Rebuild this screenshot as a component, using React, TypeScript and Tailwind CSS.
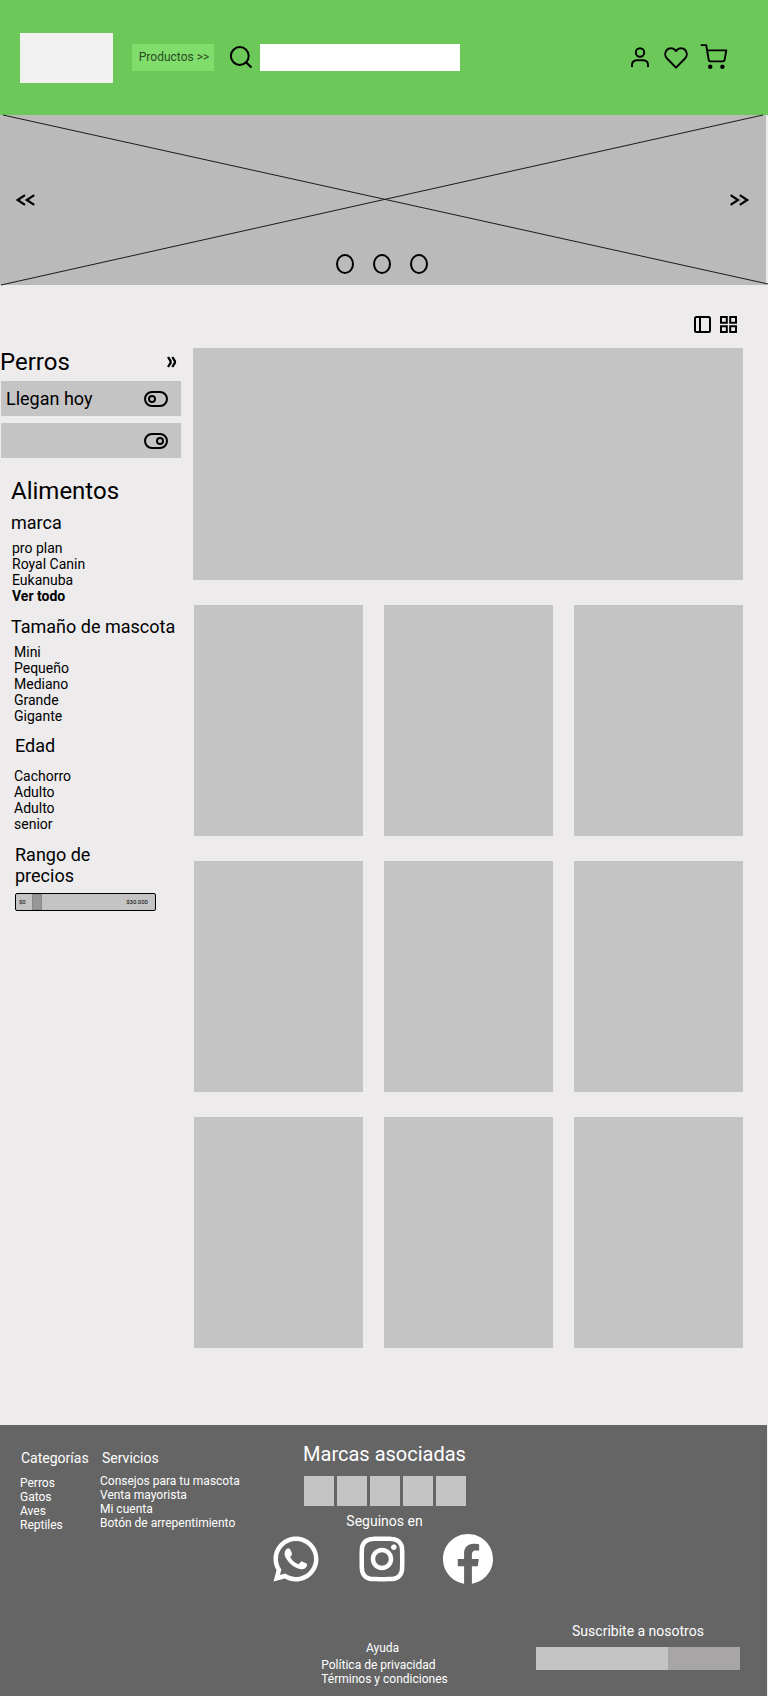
import { useState } from "react";
import type { ReactNode } from "react";
import { RiFacebookCircleFill, RiInstagramLine, RiWhatsappLine } from "react-icons/ri";

const brands = ["pro plan", "Royal Canin", "Eukanuba"];
const sizes = ["Mini", "Pequeño", "Mediano", "Grande", "Gigante"];
const ages = ["Cachorro", "Adulto", "Adulto", "senior"];
const categories = ["Perros", "Gatos", "Aves", "Reptiles"];
const services = ["Consejos para tu mascota", "Venta mayorista", "Mi cuenta", "Botón de arrepentimiento"];

function Header() {
  return (
    <header className="flex h-[115px] items-center bg-[#6dc85a] pr-10 pl-5">
      <a href="#inicio" aria-label="Inicio" className="h-[50px] w-[93px] bg-[#f1f1f1]" />
      <button type="button" className="ml-[19px] h-[27px] w-[82px] bg-[#80dc6b] pb-0.5 pl-0.5 text-xs whitespace-nowrap text-[#2a4e23]">
        Productos &gt;&gt;
      </button>
      <form role="search" className="ml-4 flex items-center gap-2" onSubmit={(e) => e.preventDefault()}>
        <button type="submit" aria-label="Buscar">
          <svg width="22" height="23" viewBox="0 0 22 23" fill="none" stroke="black" strokeWidth="2">
            <circle cx="9.8" cy="10" r="8.9" />
            <path d="M15.8 16l5.6 5.5" strokeWidth="2.3" />
          </svg>
        </button>
        <input type="search" aria-label="Buscar productos" className="h-[27px] w-[200px] bg-white px-2 text-sm outline-none" />
      </form>
      <nav className="ml-auto flex items-center gap-3">
        <a href="#cuenta" aria-label="Mi cuenta">
          <svg width="23" height="27" viewBox="0 0 23 27" fill="none" stroke="black" strokeWidth="2">
            <circle cx="11" cy="8.5" r="4.2" />
            <path d="M3 23v-2.2a4.6 4.6 0 0 1 4.6-4.6h6.8a4.6 4.6 0 0 1 4.6 4.6V23" />
          </svg>
        </a>
        <a href="#favoritos" aria-label="Favoritos">
          <svg width="24" height="27" viewBox="0 0 24 27" fill="none" stroke="black" strokeWidth="2" strokeLinejoin="round">
            <path d="M12 23.6L2.8 14.2A6.1 6.1 0 0 1 2.8 6a5.8 5.8 0 0 1 8.3 0l.9 1 .9-1a5.8 5.8 0 0 1 8.3 0 6.1 6.1 0 0 1 0 8.2z" />
          </svg>
        </a>
        <a href="#carrito" aria-label="Carrito">
          <svg width="28" height="27" viewBox="0 0 28 27" fill="none" stroke="black" strokeWidth="1.9" strokeLinejoin="round">
            <path d="M.8 1.1h5.4l2.5 14.8a1.8 1.8 0 0 0 1.8 1.5h12.3a1.8 1.8 0 0 0 1.8-1.5L26.3 6.4H7.2" />
            <circle cx="10.2" cy="22.8" r="2.2" fill="black" stroke="none" />
            <circle cx="22.4" cy="22.8" r="2.2" fill="black" stroke="none" />
          </svg>
        </a>
      </nav>
    </header>
  );
}

function Banner() {
  return (
    <section aria-label="Promociones" className="relative mr-0.5 flex h-[170px] items-center justify-between bg-[#bababa] px-4">
      <svg className="absolute inset-0 h-full w-full overflow-visible" viewBox="0 0 766 170" preserveAspectRatio="none" stroke="#1a1a1a" strokeWidth="1">
        <path d="M3 0L768 169M1 170L763 0" vectorEffect="non-scaling-stroke" />
      </svg>
      <button type="button" aria-label="Anterior" className="relative">
        <svg width="20" height="12" viewBox="0 0 20 12" fill="none" stroke="black" strokeWidth="2.2">
          <path d="M9 1.2L1.6 6 9 10.8M18.2 1.2L10.8 6l7.4 4.8" />
        </svg>
      </button>
      <button type="button" aria-label="Siguiente" className="relative">
        <svg width="20" height="12" viewBox="0 0 20 12" fill="none" stroke="black" strokeWidth="2.2">
          <path d="M.6 1.2L8 6 .6 10.8M9.8 1.2L17.2 6l-7.4 4.8" />
        </svg>
      </button>
      <div className="absolute inset-x-0 bottom-[11px] flex justify-center gap-[19px] pr-0.5">
        {[1, 2, 3].map((n) => (
          <button key={n} type="button" aria-label={`Imagen ${n}`} className="h-5 w-[18px] rounded-[50%] border-2 border-black" />
        ))}
      </div>
    </section>
  );
}

function ToggleRow({ label, initial }: { label: string; initial: boolean }) {
  const [on, setOn] = useState(initial);
  return (
    <label className="flex h-[35px] items-center justify-between bg-[#c4c4c4] pr-[13px] pl-[5px] text-lg">
      <span>{label}</span>
      <input type="checkbox" aria-label={label || "Filtro"} checked={on} onChange={() => setOn(!on)} className="sr-only" />
      <svg width="24" height="16" viewBox="0 0 24 16" fill="none" stroke="black" strokeWidth="2">
        <rect x="1" y="1" width="22" height="14" rx="7" />
        <circle cx={on ? 16 : 8} cy="8" r="3" />
      </svg>
    </label>
  );
}

function FilterTitle({ children }: { children: ReactNode }) {
  return <h3 className="text-lg leading-[21px]">{children}</h3>;
}

function LinkList({ items, children }: { items: string[]; children?: ReactNode }) {
  return (
    <ul>
      {items.map((item, i) => (
        <li key={i}>
          <a href="#filtro">{item}</a>
        </li>
      ))}
      {children}
    </ul>
  );
}

function Sidebar() {
  const [price, setPrice] = useState(3700);
  return (
    <aside className="w-[181px] shrink-0">
      <div className="flex items-center justify-between pr-1">
        <h1 className="text-2xl leading-7">Perros</h1>
        <button type="button" aria-label="Contraer filtros">
          <svg width="10" height="12" viewBox="0 0 10 12" fill="none" stroke="black" strokeWidth="2.3">
            <path d="M1 1l2.6 4.2v1.6L1 11M5.3 1l2.6 4.2v1.6L5.3 11" />
          </svg>
        </button>
      </div>
      <div className="mt-[5px] flex flex-col gap-[7px] pl-px">
        <ToggleRow label="Llegan hoy" initial={false} />
        <ToggleRow label="" initial={true} />
      </div>
      <div className="mt-[19px] pl-[11px] text-sm leading-4">
        <h2 className="text-2xl leading-7">Alimentos</h2>
        <section className="mt-[7px]">
          <FilterTitle>marca</FilterTitle>
          <div className="mt-[7px] pl-px">
            <LinkList items={brands}>
              <li>
                <a href="#marcas" className="font-bold">Ver todo</a>
              </li>
            </LinkList>
          </div>
        </section>
        <section className="mt-3 whitespace-nowrap">
          <FilterTitle>Tamaño de mascota</FilterTitle>
          <div className="mt-[7px] pl-[3px]">
            <LinkList items={sizes} />
          </div>
        </section>
        <section className="mt-[11px] pl-[3px]">
          <div className="pl-px">
            <FilterTitle>Edad</FilterTitle>
          </div>
          <div className="mt-3">
            <LinkList items={ages} />
          </div>
        </section>
        <section className="mt-3 w-[145px] pl-1">
          <FilterTitle>
            <label htmlFor="precio" className="block w-24">Rango de precios</label>
          </FilterTitle>
          <div className="relative mt-[7px] h-[18px] rounded-xs border border-black bg-[#c4c4c4]">
            <input
              id="precio"
              type="range"
              min={0}
              max={30000}
              step={100}
              value={price}
              onChange={(e) => setPrice(Number(e.target.value))}
              className="block h-4 w-full appearance-none bg-transparent [&::-webkit-slider-thumb]:h-4 [&::-webkit-slider-thumb]:w-2.5 [&::-webkit-slider-thumb]:appearance-none [&::-webkit-slider-thumb]:border [&::-webkit-slider-thumb]:border-[#888] [&::-webkit-slider-thumb]:bg-[#979797]"
            />
            <div className="pointer-events-none absolute inset-0 flex items-center justify-between pr-[7px] pl-[3px] text-[6px] leading-4">
              <span>$0</span>
              <span>$30.000</span>
            </div>
          </div>
        </section>
      </div>
    </aside>
  );
}

function Catalog() {
  return (
    <main className="pt-[31px] pb-[77px]">
      <div className="flex justify-end gap-[9px] pr-[31px] pb-[15px]">
        <button type="button" aria-label="Vista con panel">
          <svg width="17" height="17" viewBox="0 0 17 17" fill="none" stroke="black" strokeWidth="2">
            <rect x="1" y="1" width="15" height="15" rx="1.5" />
            <path d="M6 1v15" />
          </svg>
        </button>
        <button type="button" aria-label="Vista en cuadrícula">
          <svg width="17" height="17" viewBox="0 0 17 17" fill="none" stroke="black" strokeWidth="2">
            <path d="M1 1h5.8v5.8H1zM10.2 1H16v5.8h-5.8zM1 10.2h5.8V16H1zM10.2 10.2H16V16h-5.8z" />
          </svg>
        </button>
      </div>
      <div className="flex gap-3 pr-[25px]">
        <Sidebar />
        <div className="flex-1">
          <div className="h-[232px] bg-[#c4c4c4]" />
          <ul className="mt-[25px] grid grid-cols-3 gap-x-[21px] gap-y-[25px] pl-px">
            {Array.from({ length: 9 }, (_, i) => (
              <li key={i} className="h-[231px] bg-[#c4c4c4]" />
            ))}
          </ul>
        </div>
      </div>
    </main>
  );
}

function Footer() {
  return (
    <footer className="mr-px grid grid-cols-[1fr_240px_1fr] bg-[#656565] pb-2.5 text-xs leading-[14px] text-white">
      <div className="flex pt-[25px] pl-5 whitespace-nowrap">
        <section className="w-20">
          <h2 className="pl-px text-sm leading-4">Categorías</h2>
          <div className="mt-2.5">
            <LinkList items={categories} />
          </div>
        </section>
        <section>
          <h2 className="pl-0.5 text-sm leading-4">Servicios</h2>
          <div className="mt-2">
            <LinkList items={services} />
          </div>
        </section>
      </div>
      <div className="flex flex-col items-center pt-[18px] pl-0.5">
        <h2 className="text-xl leading-[23px]">Marcas asociadas</h2>
        <ul className="mt-2.5 flex gap-[3px]">
          {Array.from({ length: 5 }, (_, i) => (
            <li key={i} className="size-[30px] bg-[#c4c4c4]" />
          ))}
        </ul>
        <h2 className="mt-[7px] text-sm leading-4">Seguinos en</h2>
        <nav className="mr-[5px] flex items-center gap-[26px]">
          <a href="#whatsapp" aria-label="WhatsApp" className="flex h-[59px] w-[60px] items-center justify-center">
            <RiWhatsappLine size={54} />
          </a>
          <a href="#instagram" aria-label="Instagram" className="flex h-[59px] w-[60px] items-center justify-center">
            <RiInstagramLine size={54} />
          </a>
          <a href="#facebook" aria-label="Facebook" className="flex h-[59px] w-[60px] items-center justify-center">
            <RiFacebookCircleFill size={60} />
          </a>
        </nav>
        <a href="#ayuda" className="mt-[53px] mr-1">Ayuda</a>
        <div className="mt-[3px] flex flex-col whitespace-nowrap">
          <a href="#privacidad">Política de privacidad</a>
          <a href="#terminos">Términos y condiciones</a>
        </div>
      </div>
      <form className="flex flex-col items-end justify-end pr-[27px] pb-4" onSubmit={(e) => e.preventDefault()}>
        <div className="w-[204px]">
          <label htmlFor="correo" className="block text-center text-sm leading-4">Suscribite a nosotros</label>
          <div className="mt-2 flex h-[23px]">
            <input id="correo" type="email" className="w-[132px] bg-[#c4c4c4] px-2 text-black outline-none" />
            <button type="submit" aria-label="Suscribirse" className="flex-1 bg-[#a7a5a6]" />
          </div>
        </div>
      </form>
    </footer>
  );
}

export default function App() {
  return (
    <div className="min-h-screen bg-[#edebec] font-[Roboto,sans-serif] text-black">
      <Header />
      <Banner />
      <Catalog />
      <Footer />
    </div>
  );
}
